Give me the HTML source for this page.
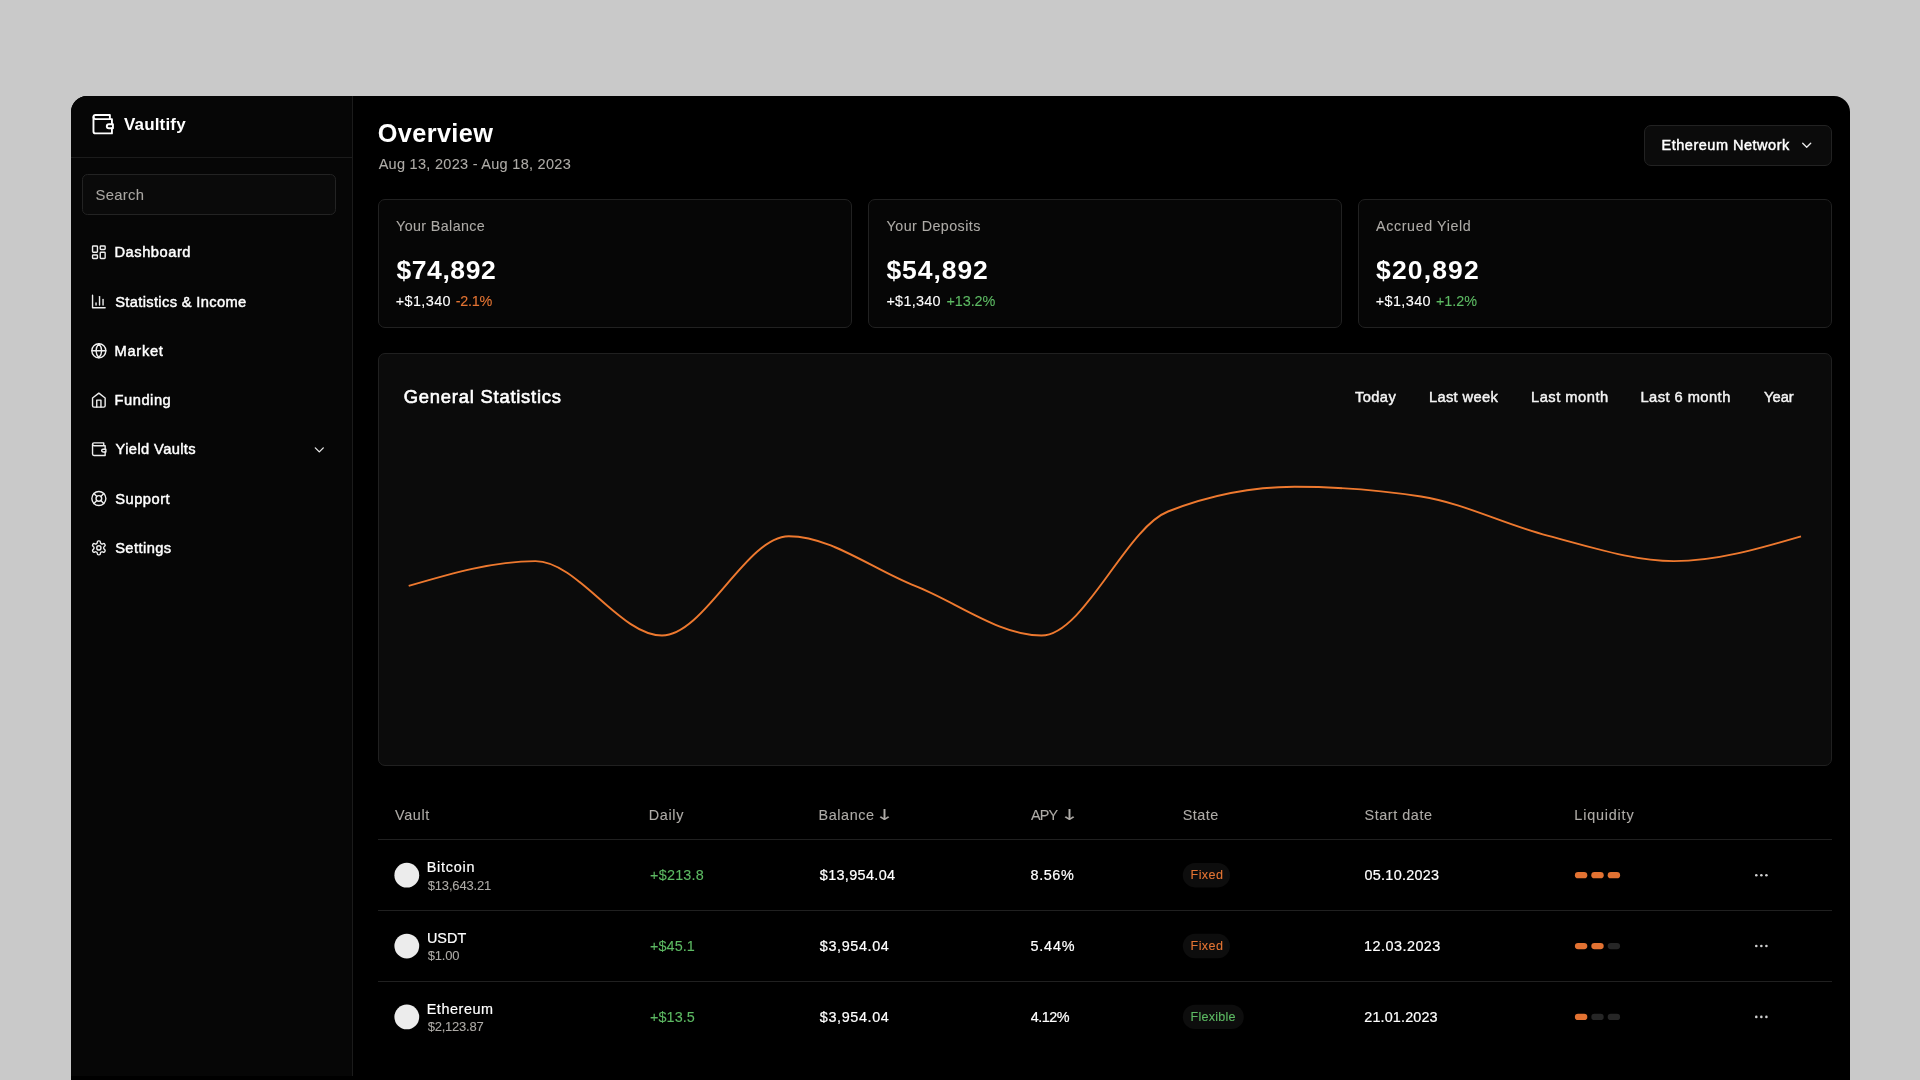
<!DOCTYPE html>
<html lang="en">
<head>
<meta charset="utf-8">
<title>Vaultify – Overview</title>
<style>
*{box-sizing:border-box;margin:0;padding:0}
html,body{width:1920px;height:1080px;overflow:hidden;background:#c9c9c9}
body{font-family:"Liberation Sans", sans-serif;color:#fff;position:relative}
.panel{position:absolute;left:71px;top:96px;width:1779px;height:1000px;background:#000;border-radius:16px 16px 0 0;overflow:hidden;will-change:transform}
.side{position:absolute;left:0;top:0;width:282px;height:980px;background:#060606;border-right:1px solid #1b1b1b}
.sidehd{position:absolute;left:0;top:61px;width:281px;height:1px;background:#1b1b1b}
.search{position:absolute;left:11px;top:78px;width:254px;height:41px;border:1px solid #232323;border-radius:5.5px;background:#0a0a0a}
.t{position:absolute;white-space:nowrap;line-height:1;font-weight:400}
.ar{font-family:"DejaVu Sans",sans-serif;font-size:15.1px;color:#aeaba7;transform:scaleX(1.5);transform-origin:0 0}
.ic{position:absolute;fill:none;stroke-linecap:round;stroke-linejoin:round;overflow:visible}
.drop{position:absolute;left:1573px;top:29px;width:188px;height:41px;border:1px solid #222;border-radius:7px;background:#0b0b0b}
.card{position:absolute;top:103px;width:474px;height:129px;border:1px solid #212121;border-radius:7px;background:#060606}
.chart{position:absolute;left:307px;top:257px;width:1454px;height:413px;border:1px solid #202020;border-radius:7px;background:#0b0b0b}
.hr{position:absolute;left:307px;width:1454px;height:1px;background:#202020}
</style>
</head>
<body>
<div class="panel">
  <div class="side">
    <div class="sidehd"></div>
    <div class="search"></div>
  </div>
  <div class="drop"></div>
  <div class="card" style="left:307px"></div>
  <div class="card" style="left:797px"></div>
  <div class="card" style="left:1287px"></div>
  <div class="chart"></div>
  <svg class="ic" style="left:-71px;top:-96px;width:1920px;height:1080px" viewBox="0 0 1920 1080"><path stroke="#ee792f" stroke-width="1.9" stroke-linecap="butt" d="M408.7,585.9C450.97,573.50,493.23,561.10,535.5,561.1C577.67,561.10,619.83,635.50,662,635.5C704.23,635.50,746.47,536.30,788.7,536.3C830.80,536.30,872.90,569.38,915,585.9C957.17,602.45,999.33,635.50,1041.5,635.5C1083.67,635.50,1125.83,527.97,1168,511.5C1210.17,495.03,1252.33,486.80,1294.5,486.8C1336.67,486.80,1378.83,490.03,1421,496.5C1463.17,502.97,1505.33,524.83,1547.5,535.6C1589.67,546.37,1631.83,561.10,1674,561.1C1716.33,561.10,1758.67,548.70,1801,536.3"/>
    <g stroke="none"><circle cx="406.8" cy="875.20" r="12.4" fill="#ececec"/><rect x="1182.8" y="863.00" width="47.2" height="24.4" rx="12.2" fill="#0d0d0d"/><rect x="1574.9" y="872.05" width="12.4" height="6.3" rx="3.15" fill="#e27232"/><rect x="1591.3" y="872.05" width="12.4" height="6.3" rx="3.15" fill="#e27232"/><rect x="1607.7" y="872.05" width="12.4" height="6.3" rx="3.15" fill="#e27232"/><circle cx="1756.30" cy="875.20" r="1.3" fill="#d0d0d0"/><circle cx="1761.35" cy="875.20" r="1.3" fill="#d0d0d0"/><circle cx="1766.40" cy="875.20" r="1.3" fill="#d0d0d0"/>
    <circle cx="406.8" cy="946.05" r="12.4" fill="#ececec"/><rect x="1182.8" y="933.85" width="47.2" height="24.4" rx="12.2" fill="#0d0d0d"/><rect x="1574.9" y="942.90" width="12.4" height="6.3" rx="3.15" fill="#e27232"/><rect x="1591.3" y="942.90" width="12.4" height="6.3" rx="3.15" fill="#e27232"/><rect x="1607.7" y="942.90" width="12.4" height="6.3" rx="3.15" fill="#262626"/><circle cx="1756.30" cy="946.05" r="1.3" fill="#d0d0d0"/><circle cx="1761.35" cy="946.05" r="1.3" fill="#d0d0d0"/><circle cx="1766.40" cy="946.05" r="1.3" fill="#d0d0d0"/>
    <circle cx="406.8" cy="1016.90" r="12.4" fill="#ececec"/><rect x="1182.8" y="1004.70" width="61.0" height="24.4" rx="12.2" fill="#0d0d0d"/><rect x="1574.9" y="1013.75" width="12.4" height="6.3" rx="3.15" fill="#e27232"/><rect x="1591.3" y="1013.75" width="12.4" height="6.3" rx="3.15" fill="#262626"/><rect x="1607.7" y="1013.75" width="12.4" height="6.3" rx="3.15" fill="#262626"/><circle cx="1756.30" cy="1016.90" r="1.3" fill="#d0d0d0"/><circle cx="1761.35" cy="1016.90" r="1.3" fill="#d0d0d0"/><circle cx="1766.40" cy="1016.90" r="1.3" fill="#d0d0d0"/>
    </g>
    <g transform="translate(90.40 111.90) scale(1.0250)" stroke="#ffffff" stroke-width="1.85"><path d="M21 12V7H5a2 2 0 0 1 0-4h14v4"/><path d="M3 5v14a2 2 0 0 0 2 2h16v-5"/><path d="M18 12a2 2 0 0 0 0 4h4v-4Z"/></g>
    <g transform="translate(90.45 243.85) scale(0.7000)" stroke="#eeeeee" stroke-width="2.0"><rect width="7" height="9" x="3" y="3" rx="1"/><rect width="7" height="5" x="14" y="3" rx="1"/><rect width="7" height="9" x="14" y="12" rx="1"/><rect width="7" height="5" x="3" y="16" rx="1"/></g>
    <g transform="translate(90.45 293.10) scale(0.7000)" stroke="#eeeeee" stroke-width="2.0"><path d="M3 3v18h18"/><path d="M18 17V9"/><path d="M13 17V5"/><path d="M8 17v-3"/></g>
    <g transform="translate(90.45 342.40) scale(0.7000)" stroke="#eeeeee" stroke-width="2.0"><circle cx="12" cy="12" r="10"/><path d="M12 2a14.5 14.5 0 0 0 0 20 14.5 14.5 0 0 0 0-20"/><path d="M2 12h20"/></g>
    <g transform="translate(90.45 391.70) scale(0.7000)" stroke="#eeeeee" stroke-width="2.0"><path d="m3 9 9-7 9 7v11a2 2 0 0 1-2 2H5a2 2 0 0 1-2-2z"/><path d="M9 22V12h6v10"/></g>
    <g transform="translate(90.45 440.80) scale(0.7000)" stroke="#eeeeee" stroke-width="2.0"><path d="M21 12V7H5a2 2 0 0 1 0-4h14v4"/><path d="M3 5v14a2 2 0 0 0 2 2h16v-5"/><path d="M18 12a2 2 0 0 0 0 4h4v-4Z"/></g>
    <g transform="translate(90.45 490.05) scale(0.7000)" stroke="#eeeeee" stroke-width="2.0"><circle cx="12" cy="12" r="10"/><path d="m4.93 4.93 4.24 4.24"/><path d="m14.83 9.17 4.24-4.24"/><path d="m14.83 14.83 4.24 4.24"/><path d="m9.17 14.83-4.24 4.24"/><circle cx="12" cy="12" r="4"/></g>
    <g transform="translate(90.45 539.50) scale(0.7000)" stroke="#eeeeee" stroke-width="2.0"><path d="M12.22 2h-.44a2 2 0 0 0-2 2v.18a2 2 0 0 1-1 1.73l-.43.25a2 2 0 0 1-2 0l-.15-.08a2 2 0 0 0-2.73.73l-.22.38a2 2 0 0 0 .73 2.73l.15.1a2 2 0 0 1 1 1.72v.51a2 2 0 0 1-1 1.74l-.15.09a2 2 0 0 0-.73 2.73l.22.38a2 2 0 0 0 2.73.73l.15-.08a2 2 0 0 1 2 0l.43.25a2 2 0 0 1 1 1.73V20a2 2 0 0 0 2 2h.44a2 2 0 0 0 2-2v-.18a2 2 0 0 1 1-1.73l.43-.25a2 2 0 0 1 2 0l.15.08a2 2 0 0 0 2.73-.73l.22-.39a2 2 0 0 0-.73-2.73l-.15-.08a2 2 0 0 1-1-1.74v-.5a2 2 0 0 1 1-1.74l.15-.09a2 2 0 0 0 .73-2.73l-.22-.38a2 2 0 0 0-2.73-.73l-.15.08a2 2 0 0 1-2 0l-.43-.25a2 2 0 0 1-1-1.73V4a2 2 0 0 0-2-2z"/><circle cx="12" cy="12" r="3"/></g>
    <g transform="translate(311.30 441.90) scale(0.6667)" stroke="#e9e9e9" stroke-width="2"><path d="m6 9 6 6 6-6"/></g>
    <g transform="translate(1798.70 137.30) scale(0.6667)" stroke="#e9e9e9" stroke-width="2"><path d="m6 9 6 6 6-6"/></g>
  </svg>
  <div class="hr" style="top:743px"></div>
  <div class="hr" style="top:814px"></div>
  <div class="hr" style="top:885px"></div>

  <span class="t ar" id="ar1" style="left:803.50px;top:712.00px">↓</span>
  <span class="t ar" id="ar2" style="left:989.10px;top:712.00px">↓</span>
  <span class="t" id="logo" style="left:53.00px;top:20.00px;font-size:17px;color:#ffffff;letter-spacing:0.161px;font-weight:700">Vaultify</span>
  <span class="t" id="search" style="left:24.58px;top:92.00px;font-size:14.8px;color:#a9a6a2;letter-spacing:0.304px;-webkit-text-stroke:0.08px #a9a6a2">Search</span>
  <span class="t" id="n1" style="left:43.48px;top:149.00px;font-size:14.7px;color:#ffffff;letter-spacing:0.526px;-webkit-text-stroke:0.45px #ffffff">Dashboard</span>
  <span class="t" id="n2" style="left:44.17px;top:199.00px;font-size:14.7px;color:#ffffff;letter-spacing:0.340px;-webkit-text-stroke:0.45px #ffffff">Statistics &amp; Income</span>
  <span class="t" id="n3" style="left:43.48px;top:248.00px;font-size:14.7px;color:#ffffff;letter-spacing:0.705px;-webkit-text-stroke:0.45px #ffffff">Market</span>
  <span class="t" id="n4" style="left:43.48px;top:297.00px;font-size:14.7px;color:#ffffff;letter-spacing:0.534px;-webkit-text-stroke:0.45px #ffffff">Funding</span>
  <span class="t" id="n5" style="left:44.60px;top:346.00px;font-size:14.7px;color:#ffffff;letter-spacing:0.377px;-webkit-text-stroke:0.45px #ffffff">Yield Vaults</span>
  <span class="t" id="n6" style="left:44.17px;top:396.00px;font-size:14.7px;color:#ffffff;letter-spacing:0.512px;-webkit-text-stroke:0.45px #ffffff">Support</span>
  <span class="t" id="n7" style="left:44.17px;top:445.00px;font-size:14.7px;color:#ffffff;letter-spacing:0.422px;-webkit-text-stroke:0.45px #ffffff">Settings</span>
  <span class="t" id="h1" style="left:306.81px;top:25.00px;font-size:25.3px;color:#ffffff;letter-spacing:0.370px;font-weight:700">Overview</span>
  <span class="t" id="date" style="left:307.64px;top:61.00px;font-size:14.5px;color:#aeaba7;letter-spacing:0.288px;-webkit-text-stroke:0.08px #aeaba7">Aug 13, 2023 - Aug 18, 2023</span>
  <span class="t" id="eth" style="left:1590.59px;top:42.00px;font-size:14.5px;color:#ffffff;letter-spacing:0.506px;-webkit-text-stroke:0.45px #ffffff">Ethereum Network</span>
  <span class="t" id="c1l" style="left:325.02px;top:123.00px;font-size:14.3px;color:#aeaba7;letter-spacing:0.389px;-webkit-text-stroke:0.08px #aeaba7">Your Balance</span>
  <span class="t" id="c1v" style="left:325.40px;top:161.00px;font-size:26.5px;color:#ffffff;letter-spacing:0.595px;font-weight:700">$74,892</span>
  <span class="t" id="c2l" style="left:815.62px;top:123.00px;font-size:14.3px;color:#aeaba7;letter-spacing:0.441px;-webkit-text-stroke:0.08px #aeaba7">Your Deposits</span>
  <span class="t" id="c2v" style="left:815.40px;top:161.00px;font-size:26.5px;color:#ffffff;letter-spacing:0.945px;font-weight:700">$54,892</span>
  <span class="t" id="c3l" style="left:1305.04px;top:123.00px;font-size:14.3px;color:#aeaba7;letter-spacing:0.610px;-webkit-text-stroke:0.08px #aeaba7">Accrued Yield</span>
  <span class="t" id="c3v" style="left:1305.00px;top:161.00px;font-size:26.5px;color:#ffffff;letter-spacing:1.145px;font-weight:700">$20,892</span>
  <span class="t" id="gs" style="left:332.75px;top:292.00px;font-size:18.4px;color:#ffffff;letter-spacing:0.772px;-webkit-text-stroke:0.62px #ffffff">General Statistics</span>
  <span class="t" id="t1" style="left:1284.10px;top:294.00px;font-size:14.7px;color:#f4f4f4;letter-spacing:0.363px;-webkit-text-stroke:0.45px #f4f4f4">Today</span>
  <span class="t" id="t2" style="left:1357.88px;top:294.00px;font-size:14.7px;color:#f4f4f4;letter-spacing:0.348px;-webkit-text-stroke:0.45px #f4f4f4">Last week</span>
  <span class="t" id="t3" style="left:1459.98px;top:294.00px;font-size:14.7px;color:#f4f4f4;letter-spacing:0.511px;-webkit-text-stroke:0.45px #f4f4f4">Last month</span>
  <span class="t" id="t4" style="left:1569.38px;top:294.00px;font-size:14.7px;color:#f4f4f4;letter-spacing:0.458px;-webkit-text-stroke:0.45px #f4f4f4">Last 6 month</span>
  <span class="t" id="t5" style="left:1693.00px;top:294.00px;font-size:14.7px;color:#f4f4f4;letter-spacing:0.017px;-webkit-text-stroke:0.45px #f4f4f4">Year</span>
  <span class="t" id="th1" style="left:324.05px;top:712.00px;font-size:14.4px;color:#aeaba7;letter-spacing:0.624px;-webkit-text-stroke:0.1px #aeaba7">Vault</span>
  <span class="t" id="th2" style="left:577.72px;top:712.00px;font-size:14.4px;color:#aeaba7;letter-spacing:0.680px;-webkit-text-stroke:0.1px #aeaba7">Daily</span>
  <span class="t" id="th3" style="left:747.62px;top:712.00px;font-size:14.4px;color:#aeaba7;letter-spacing:0.562px;-webkit-text-stroke:0.1px #aeaba7">Balance</span>
  <span class="t" id="th4" style="left:959.95px;top:712.00px;font-size:14.4px;color:#aeaba7;letter-spacing:-0.780px;-webkit-text-stroke:0.1px #aeaba7">APY</span>
  <span class="t" id="th5" style="left:1111.70px;top:712.00px;font-size:14.4px;color:#aeaba7;letter-spacing:0.503px;-webkit-text-stroke:0.1px #aeaba7">State</span>
  <span class="t" id="th6" style="left:1293.50px;top:712.00px;font-size:14.4px;color:#aeaba7;letter-spacing:0.566px;-webkit-text-stroke:0.1px #aeaba7">Start date</span>
  <span class="t" id="th7" style="left:1503.33px;top:712.00px;font-size:14.4px;color:#aeaba7;letter-spacing:0.812px;-webkit-text-stroke:0.1px #aeaba7">Liquidity</span>
  <span class="t" id="r0n" style="left:355.68px;top:764.00px;font-size:14.4px;color:#ffffff;letter-spacing:0.760px;-webkit-text-stroke:0.2px #ffffff">Bitcoin</span>
  <span class="t" id="r0p" style="left:356.74px;top:783.00px;font-size:13.0px;color:#aeaba7;letter-spacing:-0.169px;-webkit-text-stroke:0.08px #aeaba7">$13,643.21</span>
  <span class="t" id="r0d" style="left:579.08px;top:772.00px;font-size:14.4px;color:#5dba63;letter-spacing:0.218px;-webkit-text-stroke:0.1px #5dba63">+$213.8</span>
  <span class="t" id="r0b" style="left:748.80px;top:772.00px;font-size:14.4px;color:#ffffff;letter-spacing:0.354px;-webkit-text-stroke:0.2px #ffffff">$13,954.04</span>
  <span class="t" id="r0a" style="left:959.55px;top:772.00px;font-size:14.4px;color:#ffffff;letter-spacing:0.587px;-webkit-text-stroke:0.2px #ffffff">8.56%</span>
  <span class="t" id="r0s" style="left:1119.55px;top:773.00px;font-size:12.6px;color:#e37433;letter-spacing:0.399px;-webkit-text-stroke:0.1px #e37433">Fixed</span>
  <span class="t" id="r0t" style="left:1293.55px;top:772.00px;font-size:14.4px;color:#ffffff;letter-spacing:0.274px;-webkit-text-stroke:0.2px #ffffff">05.10.2023</span>
  <span class="t" id="r1n" style="left:355.90px;top:835.00px;font-size:14.4px;color:#ffffff;letter-spacing:0.049px;-webkit-text-stroke:0.2px #ffffff">USDT</span>
  <span class="t" id="r1p" style="left:356.74px;top:853.00px;font-size:13.0px;color:#aeaba7;letter-spacing:-0.197px;-webkit-text-stroke:0.08px #aeaba7">$1.00</span>
  <span class="t" id="r1d" style="left:579.08px;top:843.00px;font-size:14.4px;color:#5dba63;letter-spacing:0.063px;-webkit-text-stroke:0.1px #5dba63">+$45.1</span>
  <span class="t" id="r1b" style="left:748.80px;top:843.00px;font-size:14.4px;color:#ffffff;letter-spacing:0.625px;-webkit-text-stroke:0.2px #ffffff">$3,954.04</span>
  <span class="t" id="r1a" style="left:959.55px;top:843.00px;font-size:14.4px;color:#ffffff;letter-spacing:0.787px;-webkit-text-stroke:0.2px #ffffff">5.44%</span>
  <span class="t" id="r1s" style="left:1119.55px;top:844.00px;font-size:12.6px;color:#e37433;letter-spacing:0.399px;-webkit-text-stroke:0.1px #e37433">Fixed</span>
  <span class="t" id="r1t" style="left:1293.10px;top:843.00px;font-size:14.4px;color:#ffffff;letter-spacing:0.468px;-webkit-text-stroke:0.2px #ffffff">12.03.2023</span>
  <span class="t" id="r2n" style="left:355.68px;top:906.00px;font-size:14.4px;color:#ffffff;letter-spacing:0.563px;-webkit-text-stroke:0.2px #ffffff">Ethereum</span>
  <span class="t" id="r2p" style="left:356.74px;top:924.00px;font-size:13.0px;color:#aeaba7;letter-spacing:-0.236px;-webkit-text-stroke:0.08px #aeaba7">$2,123.87</span>
  <span class="t" id="r2d" style="left:579.08px;top:914.00px;font-size:14.4px;color:#5dba63;letter-spacing:0.063px;-webkit-text-stroke:0.1px #5dba63">+$13.5</span>
  <span class="t" id="r2b" style="left:748.80px;top:914.00px;font-size:14.4px;color:#ffffff;letter-spacing:0.625px;-webkit-text-stroke:0.2px #ffffff">$3,954.04</span>
  <span class="t" id="r2a" style="left:959.78px;top:914.00px;font-size:14.4px;color:#ffffff;letter-spacing:-0.494px;-webkit-text-stroke:0.2px #ffffff">4.12%</span>
  <span class="t" id="r2s" style="left:1119.55px;top:915.00px;font-size:12.6px;color:#5dba63;letter-spacing:0.206px;-webkit-text-stroke:0.1px #5dba63">Flexible</span>
  <span class="t" id="r2t" style="left:1293.33px;top:914.00px;font-size:14.4px;color:#ffffff;letter-spacing:0.132px;-webkit-text-stroke:0.2px #ffffff">21.01.2023</span>
  <span class="t" id="c1sa" style="left:324.77px;top:198.00px;font-size:14.4px;color:#ffffff;letter-spacing:0.397px;-webkit-text-stroke:0.1px #ffffff">+$1,340</span>
  <span class="t" id="c1sb" style="left:384.70px;top:198.00px;font-size:14.4px;color:#e37433;letter-spacing:-0.235px;-webkit-text-stroke:0.1px #e37433">-2.1%</span>
  <span class="t" id="c2sa" style="left:815.38px;top:198.00px;font-size:14.4px;color:#ffffff;letter-spacing:0.297px;-webkit-text-stroke:0.1px #ffffff">+$1,340</span>
  <span class="t" id="c2sb" style="left:875.38px;top:198.00px;font-size:14.4px;color:#5dba63;letter-spacing:-0.047px;-webkit-text-stroke:0.1px #5dba63">+13.2%</span>
  <span class="t" id="c3sa" style="left:1304.78px;top:198.00px;font-size:14.4px;color:#ffffff;letter-spacing:0.397px;-webkit-text-stroke:0.1px #ffffff">+$1,340</span>
  <span class="t" id="c3sb" style="left:1364.97px;top:198.00px;font-size:14.4px;color:#5dba63;letter-spacing:-0.007px;-webkit-text-stroke:0.1px #5dba63">+1.2%</span>
</div>
</body>
</html>
